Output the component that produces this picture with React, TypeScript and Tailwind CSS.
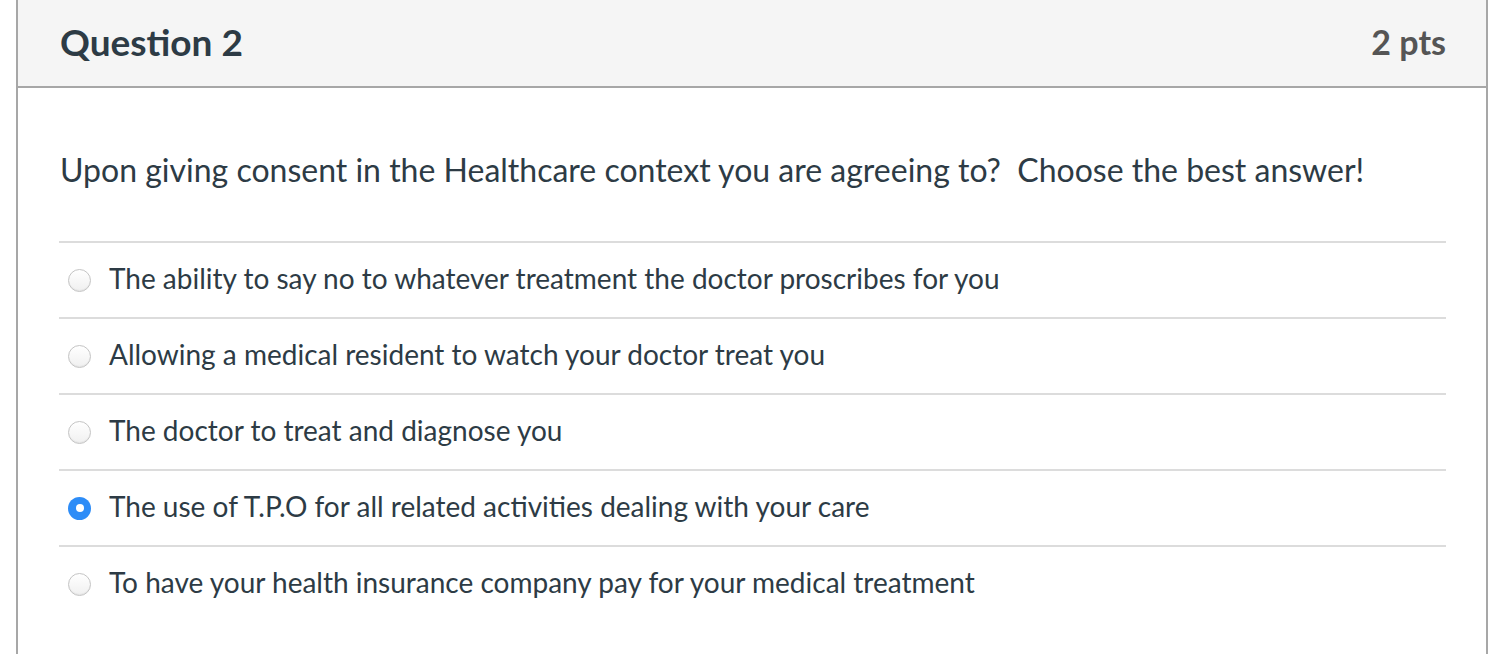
import React from "react";

const answers = [
  { text: "The ability to say no to whatever treatment the doctor proscribes for you", checked: false },
  { text: "Allowing a medical resident to watch your doctor treat you", checked: false },
  { text: "The doctor to treat and diagnose you", checked: false },
  { text: "The use of T.P.O for all related activities dealing with your care", checked: true },
  { text: "To have your health insurance company pay for your medical treatment", checked: false },
];

function Radio({ checked }: { checked: boolean }) {
  if (checked) {
    return (
      <span className="flex h-[23px] w-[23px] shrink-0 items-center justify-center rounded-full bg-[#2d8cf7]">
        <span className="h-[8px] w-[8px] rounded-full bg-white" />
      </span>
    );
  }
  return (
    <span className="h-[23px] w-[23px] shrink-0 rounded-full border border-[#c4c4c4] bg-gradient-to-b from-white to-[#f0f0f0] shadow-[inset_0_-1px_1px_rgba(0,0,0,0.05)]" />
  );
}

export default function App() {
  return (
    <div className="min-h-[654px] bg-white" style={{ fontFamily: "Lato, 'Noto Sans', sans-serif" }}>
      <div className="ml-[16px] w-[1472px] min-h-[654px] border-x-2 border-[#a7a7a7]">
        <div className="flex h-[88px] items-center justify-between border-b-2 border-[#a7a7a7] bg-[#f5f5f5] pl-[42px] pr-[40px]">
          <h2 className="text-[37px] font-bold leading-none text-[#2d3b45] -mt-[4px]">Question 2</h2>
          <span className="text-[34px] font-bold leading-none text-[#555555] -mt-[3px]">2 pts</span>
        </div>
        <div className="pl-[41px] pr-[40px] pt-[62px]">
          <p className="text-[32px] leading-[40px] text-[#2d3b45] pl-[1px]">
            Upon giving consent in the Healthcare context you are agreeing to?&nbsp; Choose the best answer!
          </p>
          <div className="mt-[51px]">
            {answers.map((a, i) => (
              <div key={i} className="flex h-[76px] items-center gap-[18px] border-t-2 border-[#dcdcdc] pl-[9px]">
                <Radio checked={a.checked} />
                <span className="pb-[5px] text-[28px] text-[#2d3b45]">{a.text}</span>
              </div>
            ))}
          </div>
        </div>
      </div>
    </div>
  );
}
